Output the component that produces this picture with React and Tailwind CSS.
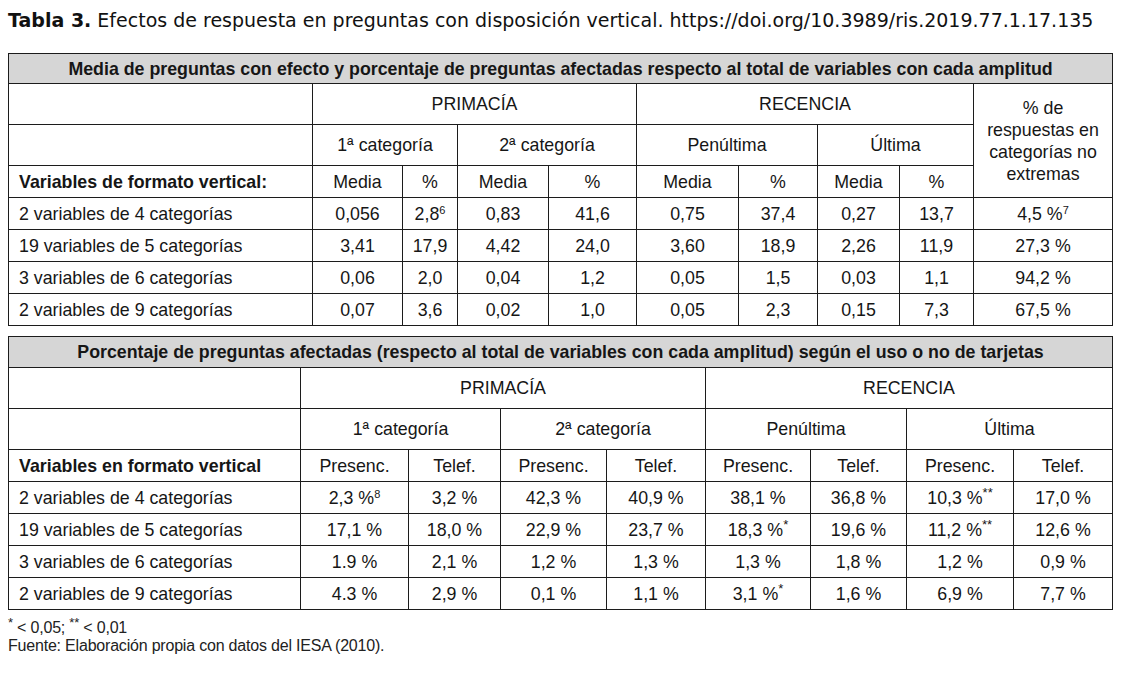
import React from "react";

const sans = "font-['Liberation_Sans',Arial,sans-serif]";
const td = "border border-[#1c1c1c] text-center align-middle p-0";

const table1 = [
  ["2 variables de 4 categorías", "0,056", ["2,8", "6"], "0,83", "41,6", "0,75", "37,4", "0,27", "13,7", ["4,5 %", "7"]],
  ["19 variables de 5 categorías", "3,41", "17,9", "4,42", "24,0", "3,60", "18,9", "2,26", "11,9", "27,3 %"],
  ["3 variables de 6 categorías", "0,06", "2,0", "0,04", "1,2", "0,05", "1,5", "0,03", "1,1", "94,2 %"],
  ["2 variables de 9 categorías", "0,07", "3,6", "0,02", "1,0", "0,05", "2,3", "0,15", "7,3", "67,5 %"],
];

const table2 = [
  ["2 variables de 4 categorías", ["2,3 %", "8"], "3,2 %", "42,3 %", "40,9 %", "38,1 %", "36,8 %", ["10,3 %", "**"], "17,0 %"],
  ["19 variables de 5 categorías", "17,1 %", "18,0 %", "22,9 %", "23,7 %", ["18,3 %", "*"], "19,6 %", ["11,2 %", "**"], "12,6 %"],
  ["3 variables de 6 categorías", "1.9 %", "2,1 %", "1,2 %", "1,3 %", "1,3 %", "1,8 %", "1,2 %", "0,9 %"],
  ["2 variables de 9 categorías", "4.3 %", "2,9 %", "0,1 %", "1,1 %", ["3,1 %", "*"], "1,6 %", "6,9 %", "7,7 %"],
];

// footnote marks: digits stay small, asterisks a bit bigger
const Val = ({ v }) =>
  Array.isArray(v) ? (
    <>
      {v[0]}
      <sup className={v[1].includes("*") ? "text-[13px]" : "text-[11px]"}>{v[1]}</sup>
    </>
  ) : (
    v
  );

const DataRow = ({ row }) => (
  <tr>
    <td className={`${td} h-[32px] text-left pl-[10px]`}>{row[0]}</td>
    {row.slice(1).map((v, i) => (
      <td key={i} className={td}>
        <Val v={v} />
      </td>
    ))}
  </tr>
);

const Tabla1 = () => (
  <table className="table-fixed border-collapse w-[1104px] border border-[#1c1c1c]">
    <colgroup>
      <col className="w-[304px]" />
      <col className="w-[90px]" />
      <col className="w-[55px]" />
      <col className="w-[91px]" />
      <col className="w-[88px]" />
      <col className="w-[102px]" />
      <col className="w-[79px]" />
      <col className="w-[82px]" />
      <col className="w-[74px]" />
      <col className="w-[139px]" />
    </colgroup>
    <tbody>
      <tr>
        <td colSpan={10} className={`${td} h-[30px] bg-[#d6d6d6] font-bold`}>
          Media de preguntas con efecto y porcentaje de preguntas afectadas respecto al total de variables con cada amplitud
        </td>
      </tr>
      <tr>
        <td className={`${td} h-[41px]`}></td>
        <td colSpan={4} className={td}>PRIMACÍA</td>
        <td colSpan={4} className={td}>RECENCIA</td>
        <td rowSpan={3} className={`${td} leading-[22px]`}>
          % de
          <br />
          respuestas en
          <br />
          categorías no
          <br />
          extremas
        </td>
      </tr>
      <tr>
        <td className={`${td} h-[41px]`}></td>
        <td colSpan={2} className={td}>1ª categoría</td>
        <td colSpan={2} className={td}>2ª categoría</td>
        <td colSpan={2} className={td}>Penúltima</td>
        <td colSpan={2} className={td}>Última</td>
      </tr>
      <tr>
        <td className={`${td} h-[32px] text-left pl-[10px] font-bold`}>Variables de formato vertical:</td>
        {["Media", "%", "Media", "%", "Media", "%", "Media", "%"].map((h, i) => (
          <td key={i} className={td}>{h}</td>
        ))}
      </tr>
      {table1.map((row, i) => (
        <DataRow key={i} row={row} />
      ))}
    </tbody>
  </table>
);

const Tabla2 = () => (
  <table className="table-fixed border-collapse w-[1104px] border border-[#1c1c1c]">
    <colgroup>
      <col className="w-[292px]" />
      <col className="w-[108px]" />
      <col className="w-[92px]" />
      <col className="w-[106px]" />
      <col className="w-[99px]" />
      <col className="w-[105px]" />
      <col className="w-[96px]" />
      <col className="w-[107px]" />
      <col className="w-[99px]" />
    </colgroup>
    <tbody>
      <tr>
        <td colSpan={9} className={`${td} h-[31px] bg-[#d6d6d6] font-bold`}>
          Porcentaje de preguntas afectadas (respecto al total de variables con cada amplitud) según el uso o no de tarjetas
        </td>
      </tr>
      <tr>
        <td className={`${td} h-[41px]`}></td>
        <td colSpan={4} className={td}>PRIMACÍA</td>
        <td colSpan={4} className={td}>RECENCIA</td>
      </tr>
      <tr>
        <td className={`${td} h-[41px]`}></td>
        <td colSpan={2} className={td}>1ª categoría</td>
        <td colSpan={2} className={td}>2ª categoría</td>
        <td colSpan={2} className={td}>Penúltima</td>
        <td colSpan={2} className={td}>Última</td>
      </tr>
      <tr>
        <td className={`${td} h-[32px] text-left pl-[10px] font-bold`}>Variables en formato vertical</td>
        {["Presenc.", "Telef.", "Presenc.", "Telef.", "Presenc.", "Telef.", "Presenc.", "Telef."].map((h, i) => (
          <td key={i} className={td}>{h}</td>
        ))}
      </tr>
      {table2.map((row, i) => (
        <DataRow key={i} row={row} />
      ))}
    </tbody>
  </table>
);

export default function App() {
  return (
    <div className="w-[1125px] h-[677px] bg-white text-[#161616] px-[8px] pt-[9px]">
      <p className="font-['DejaVu_Sans',Verdana,sans-serif] text-[19px] leading-[22px] text-[#111]">
        <span className="font-bold">Tabla 3.</span> Efectos de respuesta en preguntas con disposición vertical. https://doi.org/10.3989/ris.2019.77.1.17.135
      </p>
      <div className={`${sans} text-[17.8px] leading-[20px] mt-[22px] flex flex-col gap-[10px]`}>
        <Tabla1 />
        <Tabla2 />
      </div>
      <div className={`${sans} text-[16px] leading-[18px] tracking-[-0.2px] mt-[9px] text-[#222]`}>
        <p>
          <sup className="text-[13px]">*</sup> &lt; 0,05; <sup className="text-[13px]">**</sup> &lt; 0,01
        </p>
        <p>Fuente: Elaboración propia con datos del IESA (2010).</p>
      </div>
    </div>
  );
}
